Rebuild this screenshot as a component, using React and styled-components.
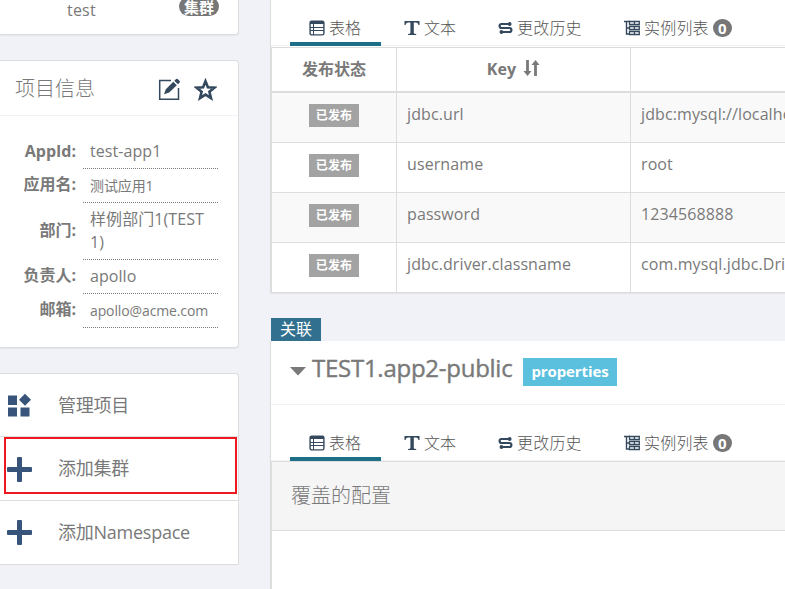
import React from "react";
import styled, { createGlobalStyle } from "styled-components";

const Global = createGlobalStyle`
  *, *::before, *::after { box-sizing: border-box; }
  body {
    margin: 0;
    background: #f1f2f7;
    color: #797979;
    font-family: "Open Sans", "Noto Sans CJK SC", sans-serif;
    font-size: 16px;
    line-height: 23px;
    overflow: hidden;
  }
`;

const Page = styled.div`
  display: grid;
  grid-template-columns: 239px 1fr;
  column-gap: 31px;
  height: 589px;
  overflow: hidden;
`;

const Sidebar = styled.aside`
  display: flex;
  flex-direction: column;
  gap: 25px;
`;

const Card = styled.section`
  height: ${(p) => p.$height}px;
  background: #fff;
  border: 1px solid #ddd;
  border-left: 0;
  border-top-width: ${(p) => (p.$cut ? 0 : 1)}px;
  border-radius: ${(p) => (p.$cut ? "0 0 4px 0" : p.$square ? "0 4px 0 0" : "0 4px 4px 0")};
  box-shadow: ${(p) => (p.$square ? "none" : "0 1px 1px rgba(0, 0, 0, 0.05)")};
`;

const ClusterRow = styled.div`
  display: flex;
  justify-content: space-between;
  align-items: flex-start;
  padding: 0 19px 0 67px;
`;

const ClusterName = styled.span`
  line-height: 20px;
  letter-spacing: 0.2px;
`;

const ClusterBadge = styled.span`
  height: 19px;
  margin-top: -3px;
  padding: 0 5px;
  border-radius: 10px;
  background: #777;
  color: #fff;
  font-size: 15px;
  font-weight: 700;
  line-height: 20px;
`;

const CardHeader = styled.header`
  display: flex;
  align-items: center;
  height: 55px;
  padding: 0 21px 0 15px;
  border-bottom: 1px solid #eff2f7;
`;

const CardTitle = styled.h2`
  flex: 1;
  margin: 0;
  font-size: 20px;
  font-weight: 300;
`;

const HeaderIcons = styled.div`
  display: flex;
  gap: 13px;
  padding-top: 3px;
`;

const InfoList = styled.dl`
  display: grid;
  grid-template-columns: 76px 135px;
  grid-template-rows: 34px 34px 57px 34px 34px;
  column-gap: 7px;
  margin: 19px 0 0;
`;

const InfoLabel = styled.dt`
  display: flex;
  align-items: center;
  justify-content: flex-end;
  font-weight: 700;
  padding-bottom: ${(p) => p.$lift || 0}px;
`;

const InfoValue = styled.dd`
  display: flex;
  align-items: center;
  margin: 0;
  padding: 0 7px;
  border-bottom: 1px dotted #797979;
  font-size: ${(p) => (p.$small ? 14 : 16)}px;
  letter-spacing: ${(p) => (p.$small ? -0.12 : 0.07)}px;
`;

const MenuItem = styled.a`
  position: relative;
  display: flex;
  align-items: center;
  gap: 26px;
  height: ${(p) => p.$height}px;
  padding-left: 7px;
  border-bottom: ${(p) => (p.$last ? 0 : 1)}px solid #ddd;
  font-size: 18px;
  letter-spacing: -0.25px;
  svg {
    flex: none;
    margin-top: ${(p) => p.$iconDrop || 0}px;
  }
`;

const Highlight = styled.span`
  position: absolute;
  left: 4px;
  top: 0;
  width: 233px;
  height: 57px;
  border: 2px solid #ed1820;
`;

const Main = styled.main`
  min-width: 0;
`;

const Namespace = styled.section`
  border-left: 1px solid #ddd;
  background: #fff;
  box-shadow: 0 1px 1px rgba(0, 0, 0, 0.05);
`;

const Tabs = styled.nav`
  display: flex;
  align-items: flex-end;
  height: ${(p) => p.$height}px;
  padding-left: 19px;
  border-bottom: 1px solid #eff2f7;
`;

const Tab = styled.a`
  display: flex;
  align-items: center;
  flex: none;
  gap: 4px;
  width: ${(p) => p.$width}px;
  height: 36px;
  margin: 0 4px -1px 0;
  padding: 4px 0 0 19px;
  border-bottom: 4px solid ${(p) => (p.$active ? "#1d6f87" : "transparent")};
  border-radius: 2px 2px 0 0;
  color: #555;
  font-weight: 300;
  letter-spacing: ${(p) => p.$spacing || 0}px;
  white-space: nowrap;
  svg { flex: none; }
`;

const Count = styled.span`
  height: 18px;
  min-width: 19px;
  border-radius: 10px;
  background: #777;
  color: #fff;
  font-size: 15px;
  font-weight: 700;
  line-height: 18px;
  text-align: center;
`;

const ConfigTable = styled.table`
  width: 700px;
  margin-top: 1px;
  border-collapse: separate;
  border-spacing: 0;
  border-top: 1px solid #ddd;
  border-left: 1px solid #ddd;
  table-layout: fixed;
`;

const TableClip = styled.div`
  overflow: hidden;
`;

const HeadCell = styled.th`
  width: ${(p) => p.$width}px;
  height: 45px;
  padding: 0;
  border-right: 1px solid #ddd;
  border-bottom: 2px solid #ddd;
  font-weight: 700;
  svg { vertical-align: -2px; margin-left: 3px; }
`;

const Row = styled.tr`
  background: ${(p) => (p.$shaded ? "#f9f9f9" : "#fff")};
`;

const Cell = styled.td`
  height: 50px;
  padding: 0 10px 6px;
  border-right: 1px solid #ddd;
  border-bottom: 1px solid #ddd;
  letter-spacing: 0.1px;
  white-space: nowrap;
`;

const StatusCell = styled(Cell)`
  padding: 0;
  text-align: center;
`;

const Status = styled.span`
  display: block;
  width: 50px;
  height: 23px;
  margin: -4px auto 0;
  background: #a3a3a3;
  color: #fff;
  font-size: 12px;
  font-weight: 700;
  line-height: 23px;
`;

const LinkTagRow = styled.div`
  display: flex;
  height: 48px;
  align-items: flex-end;
  padding-left: 1px;
`;

const LinkTag = styled.span`
  width: 50px;
  height: 23px;
  background: #31708f;
  color: #fff;
  text-align: center;
`;

const NamespaceHeader = styled.header`
  display: flex;
  align-items: center;
  height: 64px;
  padding: 0 0 2px 19px;
  border-bottom: 1px solid #eff2f7;
`;

const NamespaceName = styled.h3`
  width: 200px;
  margin: 0 11px 8px 6px;
  font-size: 24px;
  font-weight: 500;
  letter-spacing: -0.26px;
  -webkit-text-stroke: 0.4px #797979;
  white-space: nowrap;
`;

const Format = styled.span`
  width: 94px;
  height: 28px;
  background: #5bc0de;
  color: #fff;
  font-size: 15px;
  font-weight: 700;
  line-height: 27px;
  letter-spacing: -0.1px;
  text-align: center;
`;

const OverrideHeading = styled.div`
  height: 70px;
  padding-left: 19px;
  border: solid #ddd;
  border-width: 1px 0 1px 1px;
  background: #f5f5f5;
  font-size: 20px;
  font-weight: 300;
  line-height: 68px;
`;

const OverrideBody = styled.div`
  height: 80px;
  border-left: 1px solid #ddd;
`;

const NAVY = "#34495e";
const BLUE = "#39547a";

const EditIcon = () => (
  <svg width="23" height="23" viewBox="0 0 23 23">
    <path d="M13 2.5H1.7v18.8h18.8V10" fill="none" stroke={NAVY} strokeWidth="1.5" />
    <path d="M6 16.2l1.8-5 7.5-7.4 3.5 3.5-7.6 7.3zM16.3 2.8l1.8-1.8q.8-.6 1.5 0l2.1 2.1q.6.7 0 1.4l-1.8 1.8z" fill={NAVY} />
  </svg>
);

const StarIcon = () => (
  <svg width="23" height="23" viewBox="0 0 23 23">
    <path d="M11.5 3.2l2.4 6 6.4.5-4.9 4.1 1.6 6.3-5.5-3.5L6 20.1l1.6-6.3-4.9-4.1 6.4-.5z" fill="none" stroke={NAVY} strokeWidth="2.6" />
  </svg>
);

const BlocksIcon = () => (
  <svg width="25" height="25" viewBox="0 0 25 25">
    <path d="M1 2.5h9V12H1zM1 14.5h9v9H1zM13.5 14.5h9v9h-9zM18 .8l6 6-6 6-6-6z" fill={BLUE} />
  </svg>
);

const PlusIcon = () => (
  <svg width="25" height="25" viewBox="0 0 25 25">
    <rect x="10" y="0" width="5" height="25" rx="1" fill={BLUE} />
    <rect x="0" y="10" width="25" height="5" rx="1" fill={BLUE} />
  </svg>
);

const TableIcon = () => (
  <svg width="16" height="16" viewBox="0 0 16 16">
    <rect x="1.1" y="1.1" width="13.8" height="13.8" rx="1.6" fill="none" stroke={NAVY} strokeWidth="1.4" />
    <path d="M1 1h14v3H1z" fill={NAVY} />
    <path d="M1 7.5h14M1 10.5h14M4.5 4v11" stroke={NAVY} strokeWidth="1" />
  </svg>
);

const TextIcon = () => (
  <svg width="16" height="16" viewBox="0 0 16 16">
    <path d="M.5 1h15v4h-1Q14 2.7 12.3 2.4H9.8V13q0 1 2.4 1v1H4v-1q2.4 0 2.4-1V2.4H3.9Q2 2.7 1.5 5h-1z" fill={NAVY} />
  </svg>
);

const HistoryIcon = () => (
  <svg width="15" height="16" viewBox="0 0 15 16">
    <path d="M11 4H3.6a2 2 0 0 0 0 4h7.8a2 2 0 0 1 0 4H4" fill="none" stroke={NAVY} strokeWidth="2.2" />
    <circle cx="11.7" cy="4" r="1.9" fill={NAVY} />
    <circle cx="3.4" cy="12" r="1.9" fill={NAVY} />
  </svg>
);

const InstancesIcon = () => (
  <svg width="16" height="16" viewBox="0 0 16 16">
    <path d="M0 1.5H6M2.5 1.5V14H6M2.5 8H6" fill="none" stroke={NAVY} strokeWidth="1.4" />
    <path d="M5.5 1.5h9.8v3H5.5zM5.5 6.5h9.8v3H5.5zM5.5 11.5h9.8v3H5.5zM10.4 1.5v3M10.4 6.5v3M10.4 11.5v3" fill="none" stroke={NAVY} strokeWidth="1.3" />
  </svg>
);

const SortIcon = () => (
  <svg width="17" height="17" viewBox="0 0 17 17">
    <path d="M4.5 0v12M12.5 16V4" stroke="#797979" strokeWidth="2.8" />
    <path d="M.5 11h8l-4 5zM8.5 5h8l-4-5z" fill="#797979" />
  </svg>
);

const CaretIcon = () => (
  <svg width="16" height="9" viewBox="0 0 16 9">
    <path d="M0 0h16L8 8.5z" fill="#797979" />
  </svg>
);

const NamespaceTabs = ({ height }) => (
  <Tabs $height={height}>
    <Tab $active $width={91}><TableIcon />表格</Tab>
    <Tab $width={90}><TextIcon />文本</Tab>
    <Tab $width={122} $spacing={0.2}><HistoryIcon />更改历史</Tab>
    <Tab $width={150} $spacing={0.2}><InstancesIcon />实例列表<Count>0</Count></Tab>
  </Tabs>
);

const configs = [
  ["jdbc.url", "jdbc:mysql://localhost:3306/test"],
  ["username", "root"],
  ["password", "1234568888"],
  ["jdbc.driver.classname", "com.mysql.jdbc.Driver"],
];

export default function App() {
  return (
    <>
      <Global />
      <Page>
        <Sidebar>
          <Card $height={35} $cut>
            <ClusterRow>
              <ClusterName>test</ClusterName>
              <ClusterBadge>集群</ClusterBadge>
            </ClusterRow>
          </Card>
          <Card $height={288}>
            <CardHeader>
              <CardTitle>项目信息</CardTitle>
              <HeaderIcons><EditIcon /><StarIcon /></HeaderIcons>
            </CardHeader>
            <InfoList>
              <InfoLabel $lift={2}>AppId:</InfoLabel>
              <InfoValue>test-app1</InfoValue>
              <InfoLabel $lift={3}>应用名:</InfoLabel>
              <InfoValue $small>测试应用1</InfoValue>
              <InfoLabel $lift={3}>部门:</InfoLabel>
              <InfoValue>样例部门1(TEST 1)</InfoValue>
              <InfoLabel $lift={3}>负责人:</InfoLabel>
              <InfoValue>apollo</InfoValue>
              <InfoLabel $lift={3}>邮箱:</InfoLabel>
              <InfoValue $small>apollo@acme.com</InfoValue>
            </InfoList>
          </Card>
          <Card $height={192} $square>
            <MenuItem $height={63}><BlocksIcon />管理项目</MenuItem>
            <MenuItem $height={64} $iconDrop={2}><PlusIcon />添加集群<Highlight /></MenuItem>
            <MenuItem $height={63} $last><PlusIcon />添加Namespace</MenuItem>
          </Card>
        </Sidebar>
        <Main>
          <Namespace>
            <NamespaceTabs height={46} />
            <TableClip>
              <ConfigTable>
                <thead>
                  <tr>
                    <HeadCell $width={125}>发布状态</HeadCell>
                    <HeadCell $width={234}>Key <SortIcon /></HeadCell>
                    <HeadCell />
                  </tr>
                </thead>
                <tbody>
                  {configs.map(([key, value], i) => (
                    <Row key={key} $shaded={i % 2 === 0}>
                      <StatusCell><Status>已发布</Status></StatusCell>
                      <Cell>{key}</Cell>
                      <Cell>{value}</Cell>
                    </Row>
                  ))}
                </tbody>
              </ConfigTable>
            </TableClip>
          </Namespace>
          <LinkTagRow><LinkTag>关联</LinkTag></LinkTagRow>
          <Namespace>
            <NamespaceHeader>
              <CaretIcon />
              <NamespaceName>TEST1.app2-public</NamespaceName>
              <Format>properties</Format>
            </NamespaceHeader>
            <NamespaceTabs height={56} />
            <OverrideHeading>覆盖的配置</OverrideHeading>
            <OverrideBody />
          </Namespace>
        </Main>
      </Page>
    </>
  );
}
